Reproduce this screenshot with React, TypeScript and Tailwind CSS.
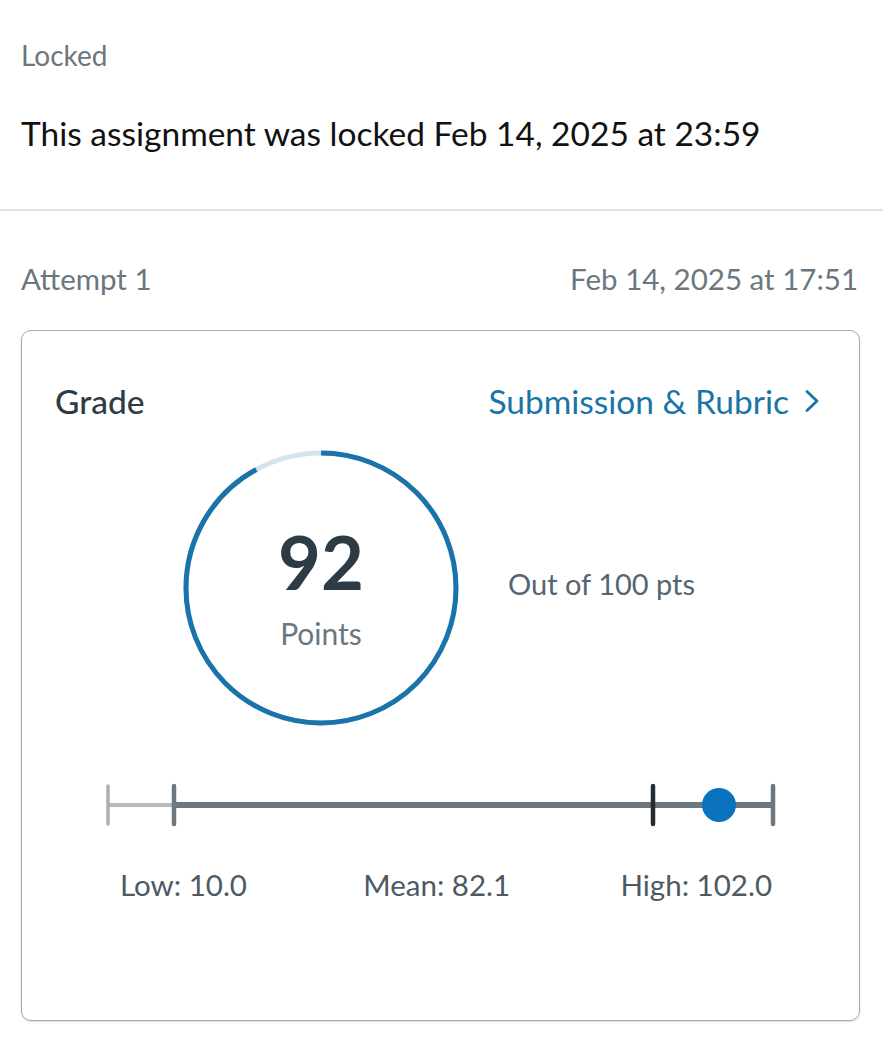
export default function App() {
  const r = 135
  const c = 2 * Math.PI * r
  const score = 92
  const filled = (c * score) / 100

  return (
    <div className="w-[883px] h-[1045px] bg-white font-['Lato','Liberation_Sans',sans-serif] overflow-hidden">
      <div className="px-[21px] pt-[37px] pb-[56px]">
        <div className="text-[28px] leading-[36px] text-[#6b7780]">Locked</div>
        <div className="mt-[40px] text-[33.5px] leading-[40px] text-[#111]">
          This assignment was locked Feb 14, 2025 at 23:59
        </div>
      </div>
      <div className="h-[2px] bg-[#e3e3e3]" />

      <div className="px-[21px] pt-[50px]">
        <div className="flex justify-between text-[29.5px] leading-[36px] text-[#6b7780]">
          <span>Attempt 1</span>
          <span className="pr-[4px]">Feb 14, 2025 at 17:51</span>
        </div>

        <div className="mt-[33px] w-[839px] h-[691px] border border-[#a9a9a9] rounded-[10px] shadow-[0_1px_2px_rgba(0,0,0,0.15)] pt-[52px]">
          <div className="flex justify-between px-[33px] text-[33.5px] leading-[36px]">
            <span className="text-[#2d3b45] font-medium">Grade</span>
            <span className="text-[#1b74a6] flex items-center gap-[14px] pr-[5px]">
              Submission &amp; Rubric
              <svg width="18" height="26" viewBox="0 0 18 26" fill="none">
                <path d="M4 3.5l10 9.5-10 9.5" stroke="#1b74a6" strokeWidth="2.8" strokeLinecap="round" strokeLinejoin="round" />
              </svg>
            </span>
          </div>

          <div className="mt-[31px] flex items-center pl-[161px]">
            <div className="relative w-[276px] h-[276px]">
              <svg width="276" height="276" viewBox="0 0 276 276">
                <circle cx="138" cy="138" r={r} fill="none" stroke="#d3e4f1" strokeWidth="5" />
                <circle
                  cx="138"
                  cy="138"
                  r={r}
                  fill="none"
                  stroke="#1a73aa"
                  strokeWidth="5"
                  strokeDasharray={`${filled} ${c}`}
                  transform="rotate(-90 138 138)"
                />
              </svg>
              <div className="absolute inset-0 flex flex-col items-center pt-[73px]">
                <span className="text-[74px] leading-[78px] font-bold text-[#2d3b45]">92</span>
                <span className="mt-[14px] text-[30px] leading-[36px] text-[#6b7780]">Points</span>
              </div>
            </div>
            <span className="ml-[49px] -mt-[8px] text-[29px] leading-[36px] text-[#556572]">Out of 100 pts</span>
          </div>

          <div className="mt-[55px] pl-[78px]">
            <svg width="690" height="48" viewBox="0 0 690 48">
              <line x1="8" y1="24" x2="74" y2="24" stroke="#b4babf" strokeWidth="4" />
              <line x1="74" y1="24" x2="673" y2="24" stroke="#6d7780" strokeWidth="6" />
              <line x1="8" y1="5" x2="8" y2="43" stroke="#a9afb4" strokeWidth="3.5" strokeLinecap="round" />
              <line x1="74" y1="5" x2="74" y2="43" stroke="#6d7780" strokeWidth="4.5" strokeLinecap="round" />
              <line x1="553" y1="5" x2="553" y2="43" stroke="#232d36" strokeWidth="4.5" strokeLinecap="round" />
              <line x1="673" y1="5" x2="673" y2="43" stroke="#6d7780" strokeWidth="4.5" strokeLinecap="round" />
              <circle cx="619" cy="24" r="17" fill="#0b72c0" />
            </svg>
          </div>

          <div className="mt-[38px] ml-[98px] w-[652px] flex justify-between text-[29.5px] leading-[36px] text-[#4d5963]">
            <span>Low: 10.0</span>
            <span className="pl-[6px]">Mean: 82.1</span>
            <span>High: 102.0</span>
          </div>
        </div>
      </div>
    </div>
  )
}
